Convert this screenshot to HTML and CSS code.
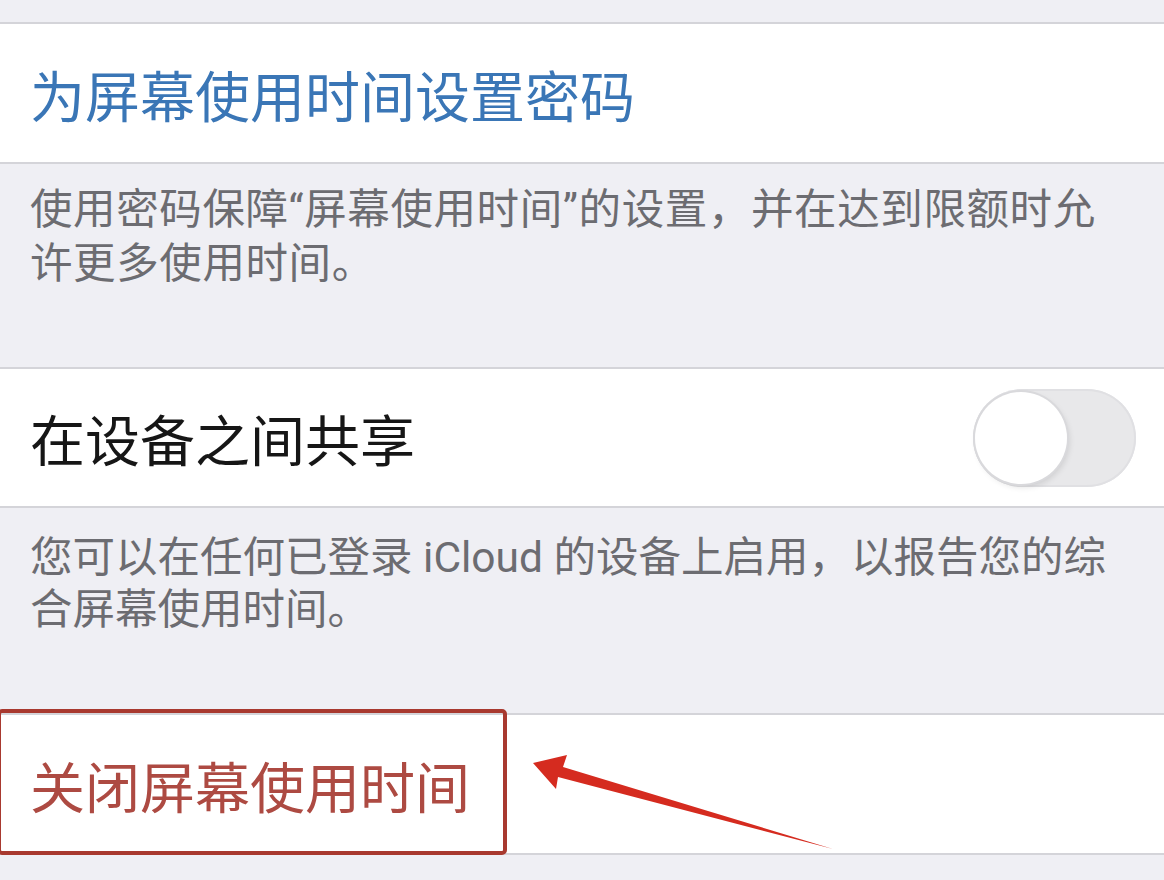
FILE: index.html
```html
<!DOCTYPE html>
<html lang="zh-CN">
<head>
<meta charset="utf-8">
<title>屏幕使用时间</title>
<link rel="stylesheet" href="styles.css">
</head>
<body>
<div class="page">
  <div class="spacer-top"></div>
  <div class="cell">
    <span class="label label-blue">为屏幕使用时间设置密码</span>
  </div>
  <div class="note note-first">
    <span class="line">使用密码保障“屏幕使用时间”的设置，并在达到限额时允</span>
    <span class="line">许更多使用时间。</span>
  </div>
  <div class="cell cell-toggle">
    <span class="label">在设备之间共享</span>
    <span class="switch"><span class="knob"></span></span>
  </div>
  <div class="note note-second">
    <span class="line">您可以在任何已登录 iCloud 的设备上启用，以报告您的综</span>
    <span class="line">合屏幕使用时间。</span>
  </div>
  <div class="cell cell-last">
    <span class="label label-red">关闭屏幕使用时间</span>
    <span class="frame"></span>
  </div>
  <div class="spacer-bottom"></div>
  <svg class="arrow" width="1164" height="880" viewBox="0 0 1164 880" aria-hidden="true">
    <polygon points="533,763 567,755 563,767 833,849 558,777 556,789" fill="#d52b1f"/>
  </svg>
</div>
</body>
</html>
```

FILE: styles.css
```css
html, body {
  margin: 0;
  padding: 0;
  background: #efeff4;
}

body {
  font-family: "Noto Sans CJK SC", "Noto Sans", sans-serif;
}

.page {
  position: relative;
  width: 1164px;
  height: 880px;
  overflow: hidden;
  display: flex;
  flex-direction: column;
}

.spacer-top {
  height: 22px;
  flex: none;
}

.spacer-bottom {
  flex: 1;
}

.cell {
  flex: none;
  position: relative;
  height: 138px;
  background: #ffffff;
  border-top: 2px solid #d4d4d9;
  border-bottom: 2px solid #d4d4d9;
  display: flex;
  align-items: center;
  justify-content: space-between;
  padding: 0 28px 0 30px;
  box-sizing: content-box;
}

.cell-toggle {
  height: 137px;
}

.label {
  font-size: 55px;
  line-height: 1;
  color: #161616;
  letter-spacing: 0;
}

.label-blue {
  color: #3a76b6;
}

.label-red {
  color: #ad4a42;
}

.note {
  flex: none;
  box-sizing: border-box;
  display: flex;
  flex-direction: column;
  align-items: flex-start;
  padding: 19px 30px 0 30px;
  font-family: Roboto, "Noto Sans CJK SC", sans-serif;
  font-size: 42.5px;
  line-height: 54px;
  color: #6c6c71;
}

.line {
  white-space: nowrap;
}

.note-first {
  height: 203px;
  letter-spacing: 0.6px;
}

.note-second {
  height: 205px;
  padding-top: 24px;
  line-height: 52px;
}

.switch {
  position: relative;
  width: 163px;
  height: 98px;
  border-radius: 49px;
  background: #e8e8ea;
  box-shadow: inset 0 0 0 2px #e0e0e3;
  flex: none;
}

.knob {
  position: absolute;
  left: 2px;
  top: 3px;
  width: 92px;
  height: 92px;
  border-radius: 50%;
  background: #ffffff;
  box-shadow: 0 0 0 2px #d9d9dc, 2px 3px 6px rgba(0, 0, 0, 0.12);
}

.frame {
  position: absolute;
  left: -3px;
  top: -6px;
  width: 502px;
  height: 138px;
  border: 4px solid #a8392f;
  border-radius: 5px;
  pointer-events: none;
}

.arrow {
  position: absolute;
  left: 0;
  top: 0;
  pointer-events: none;
}
```
